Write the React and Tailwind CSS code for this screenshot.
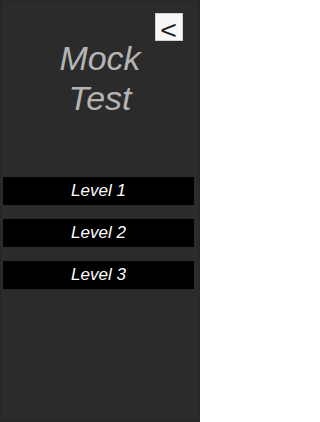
import React from 'react';

const levels = ['Level 1', 'Level 2', 'Level 3'];

const App = () => {
  return (
    <div
      className="w-[200px] h-[422px] bg-[#2b2b2b] border border-[#262626] flex flex-col overflow-hidden"
      style={{ fontFamily: '"Liberation Sans", Arial, sans-serif' }}
    >
      {/* Header */}
      <div className="flex justify-end pt-[12px] pr-[16px]">
        <button className="w-[28px] h-[28px] bg-[#f7f7f7] border border-[#d0d0d0] flex items-center justify-center text-[#1a1a1a] text-[26px] leading-none pt-[6px]">
          <span className="inline-block scale-x-110">&lt;</span>
        </button>
      </div>
      <h1 className="-mt-[3px] text-center italic text-[34px] leading-[40px] text-[#b4b4b4]">
        Mock
        <br />
        Test
      </h1>

      {/* Levels */}
      <div className="mt-[59px] ml-[2px] mr-[5px] flex flex-col gap-[14px]">
        {levels.map((l) => (
          <button key={l} className="h-[28px] bg-black text-white italic text-[17px] leading-[28px] text-center">
            {l}
          </button>
        ))}
      </div>
    </div>
  );
};

export default App;
